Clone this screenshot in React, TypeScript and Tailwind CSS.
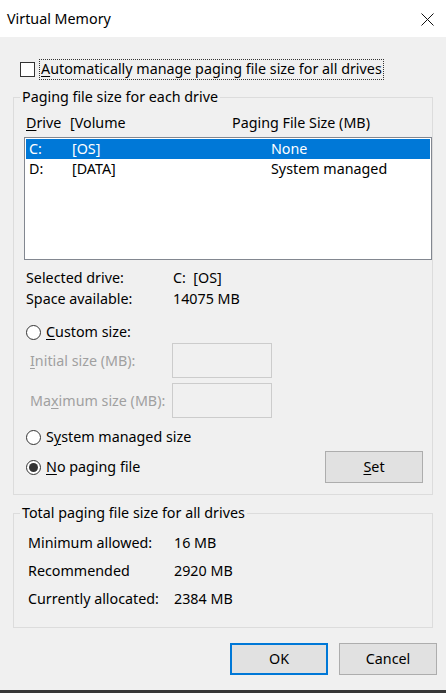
import React from "react";

const font = { fontFamily: '"Noto Sans", "Open Sans", sans-serif' };

const U = ({ children }: { children: React.ReactNode }) => <span className="underline underline-offset-2">{children}</span>;

const Radio = ({ checked }: { checked?: boolean }) => (
    <span className="flex items-center justify-center w-[15px] h-[15px] rounded-full border border-[#333] bg-white shrink-0">
        {checked && <span className="w-[9px] h-[9px] rounded-full bg-[#333]" />}
    </span>
);

const Button = ({ children, primary }: { children: React.ReactNode; primary?: boolean }) => (
    <button
        className={
            primary
                ? "w-[98px] h-[32px] bg-[#e1e1e1] border-2 border-[#0078d7] text-[14.3px] text-black"
                : "w-[98px] h-[32px] bg-[#e1e1e1] border border-[#adadad] text-[14.3px] text-black"
        }
    >
        {children}
    </button>
);

const App = () => {
    return (
        <div className="w-[446px] h-[693px] bg-[#f0f0f0] flex flex-col text-[14.3px] text-black overflow-hidden" style={font}>
            {/* title bar */}
            <div className="h-[37px] bg-white flex items-center justify-between pl-[7px] pr-[12px] shrink-0">
                <span>Virtual Memory</span>
                <svg width="13" height="13" viewBox="0 0 13 13" className="mt-[1px]">
                    <path d="M0.5 0.5 L12.5 12.5 M12.5 0.5 L0.5 12.5" stroke="#111" strokeWidth="1" />
                </svg>
            </div>

            <div className="flex flex-col px-[13px]">
                {/* auto manage */}
                <div className="flex items-center h-[21px] mt-[22px] pl-[7px]">
                    <span className="w-[15px] h-[15px] border border-[#333] bg-white shrink-0" />
                    <span className="ml-[4px] px-[1px] h-[21px] flex items-center border border-dotted border-[#333] leading-none">
                        <U>A</U>utomatically manage paging file size for all drives
                    </span>
                </div>

                {/* paging file size for each drive */}
                <fieldset className="mt-[7px] border border-[#dcdcdc] pb-[11px]">
                    <legend className="ml-[6px] px-[2px] h-[20px] leading-[20px]">Paging file size for each drive</legend>

                    <div className="flex h-[20px] items-center mt-[6px] pl-[12px]">
                        <span className="w-[44px]"><U>D</U>rive</span>
                        <span className="w-[162px]">[Volume</span>
                        <span>Paging File Size (MB)</span>
                    </div>

                    <div className="mt-[4px] ml-[10px] h-[123px] border border-[#828790] bg-white p-[1px]">
                        <div className="flex items-center h-[20px] bg-[#0078d7] text-white pl-[3px]">
                            <span className="w-[43px]">C:</span>
                            <span className="w-[199px]">[OS]</span>
                            <span>None</span>
                        </div>
                        <div className="flex items-center h-[20px] pl-[3px]">
                            <span className="w-[43px]">D:</span>
                            <span className="w-[199px]">[DATA]</span>
                            <span>System managed</span>
                        </div>
                    </div>

                    <div className="mt-[8px] pl-[12px]">
                        <div className="flex items-center h-[20px]">
                            <span className="w-[147px]">Selected drive:</span>
                            <span>C:&nbsp;&nbsp;[OS]</span>
                        </div>
                        <div className="flex items-center h-[22px]">
                            <span className="w-[147px]">Space available:</span>
                            <span>14075 MB</span>
                        </div>
                    </div>

                    <div className="flex items-center h-[20px] mt-[12px] pl-[12px] gap-[5px]">
                        <Radio />
                        <span><U>C</U>ustom size:</span>
                    </div>

                    <div className="flex items-center h-[35px] mt-[1px] pl-[16px] text-[#a0a0a0]">
                        <span className="w-[142px]"><U>I</U>nitial size (MB):</span>
                        <span className="w-[100px] h-[35px] border border-[#cccccc] bg-[#f0f0f0]" />
                    </div>
                    <div className="flex items-center h-[35px] mt-[5px] pl-[16px] text-[#a0a0a0]">
                        <span className="w-[142px]">Ma<U>x</U>imum size (MB):</span>
                        <span className="w-[100px] h-[35px] border border-[#cccccc] bg-[#f0f0f0]" />
                    </div>

                    <div className="flex items-center h-[20px] mt-[9px] pl-[12px] gap-[5px]">
                        <Radio />
                        <span>S<U>y</U>stem managed size</span>
                    </div>

                    <div className="flex items-center h-[32px] mt-[4px] pl-[12px] pr-[9px]">
                        <Radio checked />
                        <span className="ml-[5px]"><U>N</U>o paging file</span>
                        <span className="ml-auto w-[98px] h-[32px] flex items-center justify-center bg-[#e1e1e1] border border-[#adadad]">
                            <U>S</U>et
                        </span>
                    </div>
                </fieldset>

                {/* totals */}
                <fieldset className="mt-[8px] border border-[#dcdcdc] pb-[18px]">
                    <legend className="ml-[6px] px-[2px] h-[20px] leading-[20px]">Total paging file size for all drives</legend>
                    <div className="flex flex-col gap-[8px] pt-[10px] pl-[14px]">
                        <div className="flex items-center h-[20px]">
                            <span className="w-[146px]">Minimum allowed:</span>
                            <span>16 MB</span>
                        </div>
                        <div className="flex items-center h-[20px]">
                            <span className="w-[146px]">Recommended</span>
                            <span>2920 MB</span>
                        </div>
                        <div className="flex items-center h-[20px]">
                            <span className="w-[146px]">Currently allocated:</span>
                            <span>2384 MB</span>
                        </div>
                    </div>
                </fieldset>
            </div>

            <div className="flex justify-end gap-[11px] mt-[15px] pr-[9px]">
                <Button primary>OK</Button>
                <Button>Cancel</Button>
            </div>

            <div className="mt-auto h-[3px] bg-[#3a3a3a]" />
        </div>
    );
};

export default App;
